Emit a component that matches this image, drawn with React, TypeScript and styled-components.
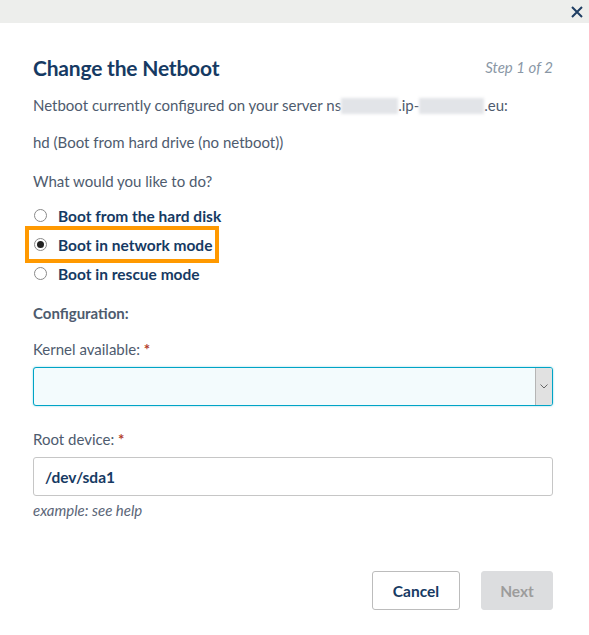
import React from "react";
import styled, { createGlobalStyle } from "styled-components";

const Global = createGlobalStyle`
  html, body { margin: 0; padding: 0; background: #fff; }
  body { font-family: "Lato", "Liberation Sans", sans-serif; }
  * { box-sizing: border-box; }
`;

const Modal = styled.div`
  width: 589px;
  height: 635px;
  background: #fff;
  display: flex;
  flex-direction: column;
`;

const TopBar = styled.div`
  height: 23px;
  background: #edeeec;
  display: flex;
  align-items: center;
  justify-content: flex-end;
  padding-right: 5px;
`;

const CloseBtn = styled.button`
  border: 0;
  background: transparent;
  padding: 0;
  width: 14px;
  height: 14px;
  display: flex;
  align-items: center;
  justify-content: center;
  cursor: pointer;
`;

const Body = styled.div`
  padding: 30px 36px 0 33px;
  display: flex;
  flex-direction: column;
`;

const Header = styled.div`
  display: flex;
  justify-content: space-between;
  align-items: center;
  height: 28px;
`;

const Title = styled.h2`
  margin: 0;
  font-size: 21px;
  font-weight: 700;
  color: #163a63;
  letter-spacing: -0.2px;
`;

const Step = styled.span`
  font-size: 15px;
  font-style: italic;
  color: #8a97a6;
`;

const Text = styled.p<{ $mt: number; $bold?: boolean }>`
  margin: ${(p) => p.$mt}px 0 0;
  font-size: 15px;
  line-height: 20px;
  color: #4e5b6e;
  font-weight: ${(p) => (p.$bold ? 700 : 400)};
`;

const Blur = styled.span<{ $w: number }>`
  display: inline-block;
  width: ${(p) => p.$w}px;
  height: 16px;
  vertical-align: -3px;
  background: #e2e4e8;
  filter: blur(1.5px);
`;

const RadioList = styled.div`
  margin-top: 10px;
  display: flex;
  flex-direction: column;
  align-items: flex-start;
`;

const RadioRow = styled.label<{ $highlight?: boolean }>`
  display: flex;
  align-items: center;
  gap: 11px;
  height: 29px;
  margin-left: -4px;
  padding-left: 5px;
  padding-right: 3px;
  width: max-content;
  outline: ${(p) => (p.$highlight ? "4px solid #ff9900" : "none")};
  outline-offset: 0;
  font-size: 15.5px;
  font-weight: 700;
  color: #163a63;
  white-space: nowrap;
`;

const RadioDot = styled.span<{ $checked?: boolean }>`
  flex-shrink: 0;
  width: 13px;
  height: 13px;
  border-radius: 50%;
  border: 1px solid #8a8a8a;
  background: #fff;
  display: flex;
  align-items: center;
  justify-content: center;
  &::after {
    content: "";
    width: 7px;
    height: 7px;
    border-radius: 50%;
    background: #222;
    display: ${(p) => (p.$checked ? "block" : "none")};
  }
`;

const Label = styled.div<{ $mt: number }>`
  margin-top: ${(p) => p.$mt}px;
  font-size: 15px;
  line-height: 20px;
  color: #4e5b6e;
`;

const Req = styled.span`
  color: #b23c2a;
  font-weight: 700;
`;

const SelectBox = styled.div`
  margin-top: 8px;
  height: 39px;
  border: 1px solid #00a4c6;
  box-shadow: 0 0 2px rgba(0, 164, 198, 0.5);
  border-radius: 3px;
  background: #f3fbfd;
  display: flex;
  justify-content: flex-end;
  overflow: hidden;
`;

const SelectArrow = styled.div`
  width: 17px;
  background: #e1e1e1;
  border-left: 1px solid #b5b5b5;
  display: flex;
  align-items: center;
  justify-content: center;
`;

const Input = styled.div`
  margin-top: 8px;
  height: 39px;
  border: 1px solid #c6c6c6;
  border-radius: 3px;
  background: #fff;
  display: flex;
  align-items: center;
  padding-left: 11px;
  font-size: 15.5px;
  font-weight: 700;
  color: #163a63;
`;

const Help = styled.div`
  margin-top: 4px;
  font-size: 15px;
  line-height: 20px;
  font-style: italic;
  color: #5b6678;
`;

const Footer = styled.div`
  margin-top: 51px;
  display: flex;
  justify-content: flex-end;
  gap: 21px;
`;

const Button = styled.button<{ $disabled?: boolean }>`
  height: 39px;
  border-radius: 3px;
  font-family: inherit;
  font-size: 15.5px;
  font-weight: 700;
  padding: 0;
  width: ${(p) => (p.$disabled ? 72 : 88)}px;
  border: 1px solid ${(p) => (p.$disabled ? "#dcdddf" : "#bcbcbc")};
  background: ${(p) => (p.$disabled ? "#dcdddf" : "#fff")};
  color: ${(p) => (p.$disabled ? "#9c9c9c" : "#163a63")};
`;

export default function App() {
  return (
    <>
      <Global />
      <Modal>
        <TopBar>
          <CloseBtn aria-label="close">
            <svg width="12" height="12" viewBox="0 0 12 12">
              <path d="M1 1 L11 11 M11 1 L1 11" stroke="#1f3e63" strokeWidth="2" strokeLinecap="butt" />
            </svg>
          </CloseBtn>
        </TopBar>
        <Body>
          <Header>
            <Title>Change the Netboot</Title>
            <Step>Step 1 of 2</Step>
          </Header>
          <Text $mt={14}>
            Netboot currently configured on your server ns<Blur $w={57} />.ip-<Blur $w={65} />.eu:
          </Text>
          <Text $mt={17}>hd (Boot from hard drive (no netboot))</Text>
          <Text $mt={19}>What would you like to do?</Text>
          <RadioList>
            <RadioRow>
              <RadioDot />
              Boot from the hard disk
            </RadioRow>
            <RadioRow $highlight>
              <RadioDot $checked />
              Boot in network mode
            </RadioRow>
            <RadioRow>
              <RadioDot />
              Boot in rescue mode
            </RadioRow>
          </RadioList>
          <Text $mt={15} $bold>Configuration:</Text>
          <Label $mt={16}>
            Kernel available: <Req>*</Req>
          </Label>
          <SelectBox>
            <SelectArrow>
              <svg width="8" height="5" viewBox="0 0 8 5">
                <path d="M0.5 0.5 L4 4 L7.5 0.5" stroke="#666" strokeWidth="1" fill="none" />
              </svg>
            </SelectArrow>
          </SelectBox>
          <Label $mt={23}>
            Root device: <Req>*</Req>
          </Label>
          <Input>/dev/sda1</Input>
          <Help>example: see help</Help>
          <Footer>
            <Button>Cancel</Button>
            <Button $disabled>Next</Button>
          </Footer>
        </Body>
      </Modal>
    </>
  );
}
